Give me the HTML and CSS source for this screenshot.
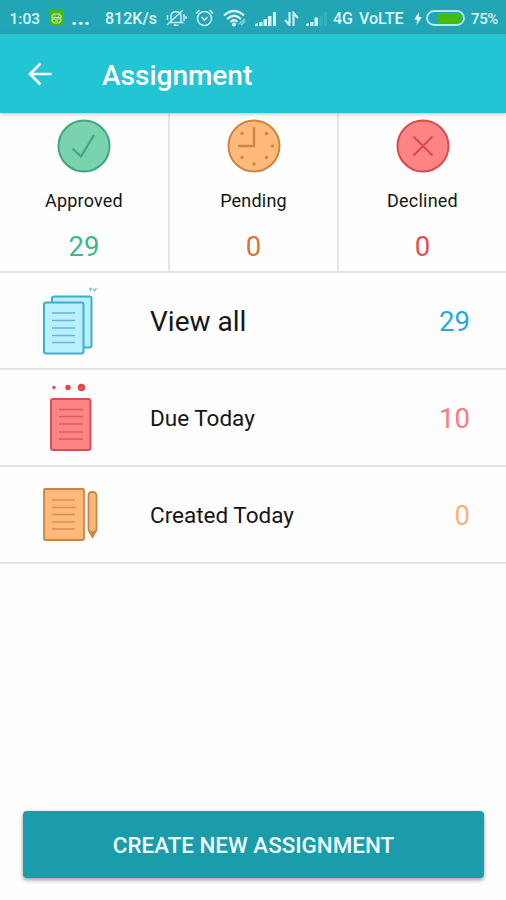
FILE: index.html
```html
<!DOCTYPE html>
<html lang="en">
<head>
<meta charset="utf-8">
<title>Assignment</title>
<link rel="stylesheet" href="styles.css">
</head>
<body>
<div class="screen">
  <div class="status">
    <span class="time">1:03</span>
    <svg width="15" height="16" viewBox="0 0 15 16"><rect width="15" height="16" rx="2.5" fill="#48b51a"/><path d="M3 7.500V5.500L5 4h5l2 1.500v2zM3 9h9v2l-2 2H5l-2-2z" fill="none" stroke="#c9efbb" stroke-width="1.100"/><path d="M5.500 6h1M9 6h1M6 11h3" stroke="#d8f5cf"/></svg>
    <span class="dots">...</span>
    <span class="speed">812K/s</span>
    <svg width="21" height="18" viewBox="0 0 21 18" fill="none" stroke="#c9eef2" stroke-width="1.500"><path d="M5 12.500V7q0-4 5-4.500 5 .5 5 4.500v5.500l1.500 1H4zM8 15.500q2.500 1.500 4.500 0M1 16L17 1M1.500 6v5M18 5v7M20 7v3"/></svg>
    <svg width="19" height="18" viewBox="0 0 19 18" fill="none" stroke="#c9eef2" stroke-width="1.600"><circle cx="9.500" cy="9.500" r="7"/><path d="M1 4.500L4.500 1M14.500 1L18 4.500M6.500 8l3 3 3-3"/></svg>
    <svg width="25" height="18" viewBox="0 0 25 18" fill="none" stroke="#d8f4f7" stroke-width="2.200"><path d="M1 6.500Q11 -2.500 21 6.500M4 10Q11 3.500 18 10M7.500 13Q11 9.500 14.500 13"/><circle cx="11" cy="15.500" r="1" fill="#d8f4f7"/><path d="M16 15l6-5M18 16l4-4" stroke="#8bd3dc" stroke-width="1.500"/></svg>
    <svg width="22" height="15" viewBox="0 0 22 15" fill="#d3f2f5"><path d="M0 15v-2l3-1v3zM4 15v-4h3.500v4zM8.500 15V8H12v7zM13 15V5h3.500v10zM18 15V1h3v14z"/></svg>
    <svg width="15" height="15" viewBox="0 0 15 15" fill="none" stroke="#c9eef2" stroke-width="2.200"><path d="M5.500 1v13L1 9M9.500 15V2l4.500 5"/></svg>
    <svg width="22" height="15" viewBox="0 0 22 15" fill="#d3f2f5"><path d="M0 15v-2l3-1v3zM4 15v-4h3.500v4zM8.500 15V6.500H12V15z"/><path d="M13.500 15V5h3v10zM18 15V1h3v14z" fill="#38afbd"/></svg>
    <span>4G</span>
    <span class="volte">VoLTE</span>
    <svg width="8" height="13" viewBox="0 0 8 14"><path d="M5 0L0 8h3L2.500 14 8 5.500H5z" fill="#e6fafb"/></svg>
    <svg width="39" height="16" viewBox="0 0 39 16"><rect x="1" y="1" width="37" height="14" rx="7" fill="none" stroke="#b5e7ec" stroke-width="1.800"/><path d="M11.500 3H31q5 0 5 5t-5 5H11.500z" fill="#42be0c"/></svg>
    <span class="percent">75%</span>
  </div>
  <header class="appbar">
    <svg class="back" width="24" height="24" viewBox="0 0 24 24" fill="none" stroke="#fff" stroke-width="2.600"><path d="M23.500 12H2.500M12.500 1.500L2 12l10.500 10.500"/></svg>
    <h1>Assignment</h1>
  </header>
  <section class="stats">
    <div class="stat approved">
      <svg width="54" height="54" viewBox="0 0 54 54"><circle cx="27" cy="27" r="25.500" fill="#79d3ae" stroke="#41a781" stroke-width="2"/><path d="M15.500 29.500l8.500 8 13-21.500" fill="none" stroke="#41a781" stroke-width="2.200"/></svg>
      <span class="label">Approved</span><span class="count">29</span>
    </div>
    <div class="stat pending">
      <svg width="54" height="54" viewBox="0 0 54 54"><circle cx="27" cy="27" r="25.500" fill="#ffb97b" stroke="#cd853f" stroke-width="2"/><path d="M27 8v19H11" fill="none" stroke="#cd853f" stroke-width="2.400"/><g fill="#cd853f"><circle cx="15" cy="14.500" r="1.700"/><circle cx="39.500" cy="14.500" r="1.700"/><circle cx="45.500" cy="27" r="1.700"/><circle cx="39.500" cy="38.500" r="1.700"/><circle cx="27" cy="45" r="1.700"/><circle cx="15" cy="38.500" r="1.700"/></g></svg>
      <span class="label">Pending</span><span class="count">0</span>
    </div>
    <div class="stat declined">
      <svg width="54" height="54" viewBox="0 0 54 54"><circle cx="27" cy="27" r="25.500" fill="#ff8585" stroke="#d94a4e" stroke-width="2"/><path d="M17.500 17.500l19 19M36.500 17.500l-19 19" stroke="#d94a4e" stroke-width="2.200"/></svg>
      <span class="label">Declined</span><span class="count">0</span>
    </div>
  </section>
  <main class="list">
    <div class="row all">
      <svg width="64" height="95" viewBox="0 0 64 95"><g fill="#b9efff" stroke="#43acc9" stroke-width="2"><rect x="16" y="23.500" width="39.500" height="51" rx="2"/><rect x="8" y="29.500" width="39.500" height="51" rx="2"/></g><path d="M16 40h23M16 47.500h23M16 55h23M16 62.500h23M16 69.500h23" stroke="#63b9d0" stroke-width="1.600"/><path d="M53 15.500h3M54.500 15.500v3M57 16l1.500 2 2-3" fill="none" stroke="#76bed4" stroke-width="1.300"/></svg>
      <span class="name">View all</span><span class="value">29</span>
    </div>
    <div class="row due">
      <svg width="64" height="95" viewBox="0 0 64 95"><g fill="#d94a4e"><circle cx="18" cy="17.500" r="1.700"/><circle cx="32" cy="17.500" r="2.700"/><circle cx="45.500" cy="17.500" r="3.700"/></g><path d="M44.500 19l2-2" stroke="#f7777b"/><rect x="15" y="29" width="39.500" height="51" rx="2" fill="#ff8585" stroke="#d84e53" stroke-width="2"/><path d="M23 39.500h24M23 46.500h24M23 54h24M23 62h24M23 69h24" stroke="#db5c60" stroke-width="1.500"/></svg>
      <span class="name">Due Today</span><span class="value">10</span>
    </div>
    <div class="row created">
      <svg width="64" height="95" viewBox="0 0 64 95"><g fill="#ffb97b" stroke="#cb8444" stroke-width="1.800"><rect x="8" y="22" width="40" height="51" rx="1.500"/><path d="M52.500 29q0-4 4-4t4 4v34l-4 7-4-7z"/></g><path d="M52.500 63l4 1.500 4-1.500-4 8z" fill="#cb8444"/><path d="M16 33h23M16 40.500h24M16 47.500h23M16 55h23M16 62h23" stroke="#d79055" stroke-width="1.500"/></svg>
      <span class="name">Created Today</span><span class="value">0</span>
    </div>
  </main>
  <button class="create" type="button">CREATE NEW ASSIGNMENT</button>
</div>
</body>
</html>
```
FILE: styles.css
```css
* { box-sizing: border-box; }
body { margin: 0; font-family: Roboto, sans-serif; background: #fefefe; }
svg { display: block; flex: none; }
.screen { display: flex; flex-direction: column; width: 506px; height: 900px; overflow: hidden; }
.status {
  display: grid;
  grid-template-columns: 39.5px 23px 33px 61px 29px 28px 32px 29px 22px 27px 26px 55px 12px 45px 35px;
  align-items: center;
  flex: none;
  height: 34px;
  padding: 2px 0 0 9.5px;
  background: #22a6b6;
  color: #dff8fa;
  font-size: 16px;
  font-weight: 500;
  line-height: 20px;
  white-space: nowrap;
}
.status span { padding-top: 1px; }
.status .time { font-size: 15.5px; }
.status .dots { padding: 0; margin-left: -1px; font-size: 22px; font-weight: 700; }
.status .percent { font-size: 15px; letter-spacing: -.4px; }
.appbar {
  display: flex;
  align-items: center;
  flex: none;
  position: relative;
  height: 79px;
  padding-left: 28px;
  background: #23c4d3;
  box-shadow: 0 1px 4px rgba(90, 60, 60, .35);
  color: #fff;
}
h1 { margin: 5px 0 0 50px; font-size: 28px; font-weight: 500; line-height: 32px; }
.stats { display: grid; grid-template-columns: 170px 169px 1fr; flex: none; height: 159.500px; border-bottom: 2px solid #e2e2e2; }
.stat { display: flex; flex-direction: column; align-items: center; padding-top: 6px; border-right: 2px solid #e6e6e6; }
.stat:last-child { border-right: 0; }
.label { margin-top: 17px; color: #151515; font-size: 18px; line-height: 22px; letter-spacing: .2px; }
.count { margin-top: 18px; font-size: 27.5px; line-height: 34px; }
.approved .count { color: #3fb58b; }
.pending .count { color: #d7743a; }
.declined .count { color: #e5504f; }
.list { flex: none; }
.row { display: grid; grid-template-columns: 64px 1fr auto; align-items: center; height: 97px; padding: 0 36px; border-bottom: 2px solid #e4e4e4; }
.row svg { align-self: start; }
.name { padding: 2px 0 0 50px; color: #151515; font-size: 22.5px; line-height: 32px; }
.all .name { padding-top: 4px; font-size: 28px; }
.value { padding-top: 4px; font-size: 27.5px; line-height: 34px; }
.all .value { color: #27acd6; }
.due .value { color: #fa7b82; }
.created .value { color: #ffb06c; }
.create {
  flex: none;
  height: 67px;
  margin: 247.500px 22px 0 23px;
  padding: 0;
  border: 0;
  border-radius: 4px;
  background: #1b9caa;
  box-shadow: 0 2px 4px rgba(0, 0, 0, .4);
  color: #effcfd;
  font: 500 22.4px/28px Roboto, sans-serif;
}
```
